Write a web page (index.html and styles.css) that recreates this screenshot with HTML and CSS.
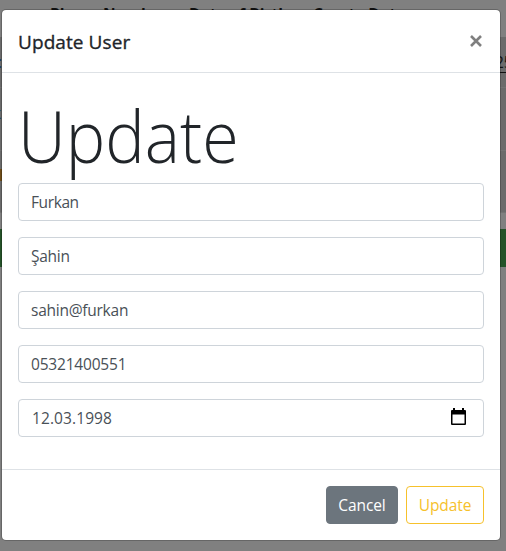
FILE: index.html
```html
<!DOCTYPE html>
<html lang="en">
<head>
<meta charset="utf-8">
<title>Update User</title>
<link rel="stylesheet" href="styles.css">
</head>
<body>
<div class="page">
  <div class="thead"><span class="c1">Phone Number</span><span class="c2">Date of Birth</span><span class="c3">Create Date</span></div>
  <div class="row first"><span class="blue">:</span><span class="created">25</span></div>
  <div class="row second"><span class="blue">k</span></div>
  <div class="row third"><span class="badge"></span></div>
  <div class="bar"></div>
</div>
<div class="modal">
  <div class="header"><h5>Update User</h5>
    <svg class="close" width="14" height="14" viewBox="0 0 14 14"><path d="M2 2l10 10M12 2L2 12"/></svg>
  </div>
  <div class="body">
    <h1><span class="display">Update</span></h1>
    <div class="field"><span class="t1">Furkan</span></div>
    <div class="field"><span class="t2">Şahin</span></div>
    <div class="field"><span class="t3">sahin@furkan</span></div>
    <div class="field"><span class="t4">05321400551</span></div>
    <div class="field date"><span class="t5">12.03.1998</span>
      <svg width="15" height="18" viewBox="0 0 15 18"><path fill-rule="evenodd" d="M2 0h2v2h7V0h2v2h1q1 0 1 1v13q0 1-1 1H1q-1 0-1-1V3q0-1 1-1h1zM1.500 6.500v9h12v-9z"/></svg>
    </div>
  </div>
  <div class="footer"><div class="btn cancel"><span>Cancel</span></div><div class="btn update"><span>Update</span></div></div>
</div>
</body>
</html>
```
FILE: styles.css
```css
* { box-sizing: border-box; }
body { margin: 0; width: 506px; height: 551px; overflow: hidden; background: #808080; color: #212529; font: 15.5px/24px "Open Sans", "Noto Sans", sans-serif; }
.page { position: absolute; inset: 0; overflow: hidden; }
.thead { height: 37px; padding: 2px 0 0 50px; display: flex; font-weight: 700; color: #111; white-space: nowrap; }
.c1 { width: 139px; }
.c2 { width: 124px; }
.row { height: 63px; background: #6b6b6b; border-bottom: 1px solid #737373; display: flex; justify-content: space-between; overflow: hidden; }
.first { height: 51px; padding-top: 13px; }
.created { width: 11px; color: #111; text-decoration: underline; text-underline-offset: 4px; }
.second { padding-top: 13px; }
.blue { color: #17365f; width: 2px; margin-left: -2px; }
.second .blue { margin-left: -7px; }
.badge { width: 3px; height: 12px; margin-top: 18px; background: #6f4d1a; }
.third { height: 62px; }
.bar { margin-top: 16px; height: 38px; background: #255329; }
.modal { position: absolute; left: 1px; top: 9px; width: 500px; height: 532px; background: #fff; background-clip: padding-box; border: 1px solid rgba(0,0,0,.2); border-radius: 5px; }
.header { height: 63px; padding: 16px; border-bottom: 1px solid #dee2e6; display: flex; justify-content: space-between; }
h5 { margin: 0; font-size: 19px; line-height: 32px; font-weight: 500; letter-spacing: .08px; -webkit-text-stroke: .35px #212529; }
.close { margin: 8px 1px 0 0; }
.close path { stroke: #7f7f7f; stroke-width: 2.600; fill: none; }
.body { height: 396px; padding: 16px; }
h1 { margin: 0 0 8px; height: 86px; line-height: 94px; font-size: 71px; font-weight: 300; }
.display { display: inline-block; transform: scaleX(.935); transform-origin: left; }
.field { height: 38px; margin-bottom: 16px; border: 1px solid #ced4da; border-radius: 4px; padding: 6px 12px; line-height: 25px; color: #495057; display: flex; justify-content: space-between; }
.t2, .t3 { letter-spacing: -.25px; }
.t1 { letter-spacing: -.4px; }
.t4 { letter-spacing: -.2px; }
.t5 { letter-spacing: .1px; }
.date { padding: 6px 17px 6px 13px; }
.date svg { margin-top: 2px; fill: #000; }
.footer { height: 71px; border-top: 1px solid #dee2e6; padding: 16px; display: flex; gap: 8px; justify-content: flex-end; }
.btn { height: 38px; border-radius: 4px; border: 1px solid; padding: 6px 0; line-height: 25px; text-align: center; white-space: nowrap; }
.cancel { width: 72px; background: #6c757d; border-color: #6c757d; color: #fff; letter-spacing: -.1px; }
.update { width: 78px; border-color: #f6c12c; color: #f6c12c; letter-spacing: -.1px; }
```
